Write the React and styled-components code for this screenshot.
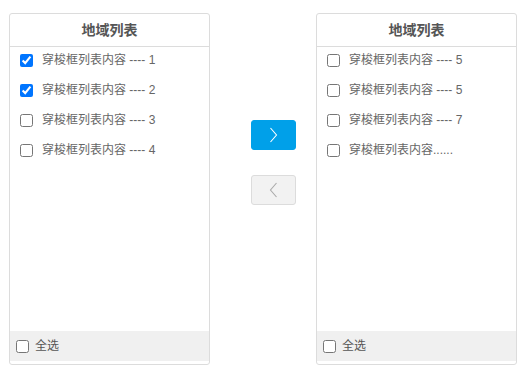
import styled, { createGlobalStyle } from "styled-components"

const GlobalStyle = createGlobalStyle`
    body {
        margin: 0;
        background: #fff;
        font-family: "Liberation Sans", "Noto Sans CJK SC", sans-serif;
    }
`

const Wrapper = styled.div`
    display: flex;
    flex-direction: row;
    align-items: flex-start;
    padding: 13px 0 0 9px;
`

const Panel = styled.div`
    box-sizing: border-box;
    width: 201px;
    height: 352px;
    border: 1px solid #dcdcdc;
    border-radius: 3px;
    display: flex;
    flex-direction: column;
    padding-bottom: 3px;
`

const PanelHeader = styled.div`
    height: 32px;
    border-bottom: 1px solid #dcdcdc;
    display: flex;
    align-items: center;
    justify-content: center;
    font-size: 14px;
    line-height: 16px;
    font-weight: bold;
    color: #555;
`

const List = styled.ul`
    list-style: none;
    margin: -2px 0 0;
    padding: 0;
    flex: 1;
`

const Row = styled.li`
    height: 30px;
    display: flex;
    align-items: center;
    padding-left: 10px;
    font-size: 12px;
    line-height: 14px;
    color: #666;
`

const Check = styled.input.attrs({ type: "checkbox" })`
    width: 13px;
    height: 13px;
    margin: 0 ${(p) => p.$gap}px 0 0;
    accent-color: #0075ff;
`

const Footer = styled.div`
    height: 30px;
    background: #f0f0f0;
    display: flex;
    align-items: center;
    padding-left: 6px;
    font-size: 12px;
    line-height: 14px;
    color: #555;
`

const Middle = styled.div`
    display: flex;
    flex-direction: column;
    gap: 25px;
    margin: 107px 20px 0 41px;
`

const MoveButton = styled.button`
    box-sizing: border-box;
    width: 45px;
    height: 30px;
    border-radius: 3px;
    border: 1px solid ${(p) => (p.$active ? "#00a0e9" : "#dcdcdc")};
    background: ${(p) => (p.$active ? "#00a0e9" : "#f2f2f2")};
    display: flex;
    align-items: center;
    justify-content: center;
    padding: 0;
`

const Chevron = ({ dir, color }) => (
    <svg width="9" height="16" viewBox="0 0 9 16">
        <path
            d={dir === "right" ? "M1.5 1 L7.5 8 L1.5 15" : "M7.5 1 L1.5 8 L7.5 15"}
            fill="none"
            stroke={color}
            strokeWidth="1.1"
        />
    </svg>
)

const TransferPanel = ({ items }) => (
    <Panel>
        <PanelHeader>地域列表</PanelHeader>
        <List>
            {items.map((item, i) => (
                <Row key={i}>
                    <Check $gap={9} defaultChecked={item.checked} />
                    {item.label}
                </Row>
            ))}
        </List>
        <Footer>
            <Check $gap={6} />
            全选
        </Footer>
    </Panel>
)

const leftItems = [
    { label: "穿梭框列表内容 ---- 1", checked: true },
    { label: "穿梭框列表内容 ---- 2", checked: true },
    { label: "穿梭框列表内容 ---- 3" },
    { label: "穿梭框列表内容 ---- 4" },
]

const rightItems = [
    { label: "穿梭框列表内容 ---- 5" },
    { label: "穿梭框列表内容 ---- 5" },
    { label: "穿梭框列表内容 ---- 7" },
    { label: "穿梭框列表内容......" },
]

const App = () => (
    <>
        <GlobalStyle />
        <Wrapper>
            <TransferPanel items={leftItems} />
            <Middle>
                <MoveButton $active>
                    <Chevron dir="right" color="#fff" />
                </MoveButton>
                <MoveButton>
                    <Chevron dir="left" color="#aaa" />
                </MoveButton>
            </Middle>
            <TransferPanel items={rightItems} />
        </Wrapper>
    </>
)

export default App
